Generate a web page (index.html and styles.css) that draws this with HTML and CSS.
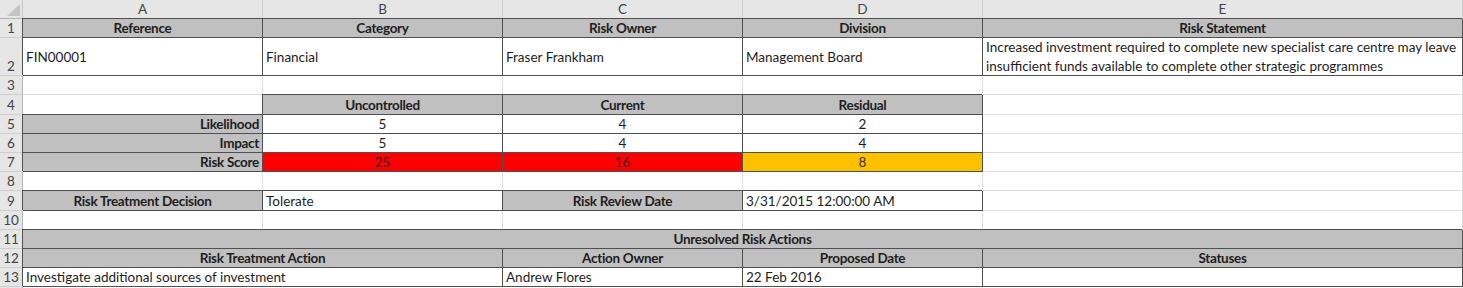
FILE: index.html
```html
<!DOCTYPE html>
<html>
<head>
<meta charset="utf-8">
<link rel="stylesheet" href="styles.css">
</head>
<body>
<div class="sheet">
  <div class="corner"><svg width="22" height="17" viewBox="0 0 22 17"><polygon points="20,4 20,16 7,16" fill="#c4c4c4"/></svg></div>
  <div class="ch">A</div><div class="ch">B</div><div class="ch">C</div><div class="ch">D</div><div class="ch">E</div>

  <div class="rh">1</div>
  <div class="c b hd">Reference</div><div class="c b hd">Category</div><div class="c b hd">Risk Owner</div><div class="c b hd">Division</div><div class="c b hd">Risk Statement</div>

  <div class="rh bottom">2</div>
  <div class="c b">FIN00001</div><div class="c b">Financial</div><div class="c b">Fraser Frankham</div><div class="c b">Management Board</div><div class="c b wrap">Increased investment required to complete new specialist care centre may leave<br>insufficient funds available to complete other strategic programmes</div>

  <div class="rh">3</div>
  <div class="c"></div><div class="c"></div><div class="c"></div><div class="c"></div><div class="c"></div>

  <div class="rh">4</div>
  <div class="c"></div><div class="c b hd">Uncontrolled</div><div class="c b hd">Current</div><div class="c b hd">Residual</div><div class="c"></div>

  <div class="rh">5</div>
  <div class="c b hd right">Likelihood</div><div class="c b mid">5</div><div class="c b mid">4</div><div class="c b mid">2</div><div class="c"></div>

  <div class="rh">6</div>
  <div class="c b hd right">Impact</div><div class="c b mid">5</div><div class="c b mid">4</div><div class="c b mid">4</div><div class="c"></div>

  <div class="rh">7</div>
  <div class="c b hd right">Risk Score</div><div class="c b mid red">25</div><div class="c b mid red">16</div><div class="c b mid amber">8</div><div class="c"></div>

  <div class="rh">8</div>
  <div class="c"></div><div class="c"></div><div class="c"></div><div class="c"></div><div class="c"></div>

  <div class="rh">9</div>
  <div class="c b hd">Risk Treatment Decision</div><div class="c b">Tolerate</div><div class="c b hd">Risk Review Date</div><div class="c b">3/31/2015 12:00:00 AM</div><div class="c"></div>

  <div class="rh">10</div>
  <div class="c"></div><div class="c"></div><div class="c"></div><div class="c"></div><div class="c"></div>

  <div class="rh">11</div>
  <div class="c b hd span5">Unresolved Risk Actions</div>

  <div class="rh">12</div>
  <div class="c b hd span2">Risk Treatment Action</div><div class="c b hd">Action Owner</div><div class="c b hd">Proposed Date</div><div class="c b hd">Statuses</div>

  <div class="rh">13</div>
  <div class="c b span2">Investigate additional sources of investment</div><div class="c b">Andrew Flores</div><div class="c b">22 Feb 2016</div><div class="c b"></div>

  <div class="rh"></div>
  <div class="c"></div><div class="c"></div><div class="c"></div><div class="c"></div><div class="c"></div>
</div>
</body>
</html>
```

FILE: styles.css
```css
html, body {
  margin: 0;
  padding: 0;
  background: #ffffff;
}

body {
  font-family: Lato, "Open Sans", sans-serif;
  font-size: 13.5px;
  color: #1e1e1e;
  overflow: hidden;
}

.sheet {
  display: grid;
  grid-template-columns: 23px 240px 240px 240px 240px 480px;
  grid-template-rows: 19px 19px 38px 19px 20px 19px 19px 19px 19px 20px 19px 19px 19px 19px 4px;
  width: 1463px;
  height: 288px;
  overflow: hidden;
}

.corner {
  background: #e6e6e6;
  border-right: 1px solid #c8c8c8;
  border-bottom: 1px solid #b4b4b4;
  box-sizing: border-box;
}

.corner svg {
  display: block;
}

.ch {
  background: #e6e6e6;
  border-right: 1px solid #cfcfcf;
  border-bottom: 1px solid #b4b4b4;
  box-sizing: border-box;
  display: flex;
  align-items: center;
  justify-content: center;
  color: #444444;
  font-size: 13.5px;
}

.rh {
  background: #e6e6e6;
  border-right: 1px solid #b4b4b4;
  border-bottom: 1px solid #cfcfcf;
  box-sizing: border-box;
  display: flex;
  align-items: center;
  justify-content: center;
  color: #444444;
  font-size: 13.5px;
}

.rh.bottom {
  align-items: flex-end;
  padding-bottom: 1px;
}

.c {
  border-right: 1px solid #dedede;
  border-bottom: 1px solid #dedede;
  box-sizing: border-box;
  display: flex;
  align-items: center;
  padding: 0 3px;
  white-space: nowrap;
  overflow: visible;
  background: #ffffff;
}

.c.b {
  border-right-color: #505050;
  border-bottom-color: #505050;
  box-shadow: -1px -1px 0 0 #505050;
}

.c.hd {
  background: #c0c0c0;
  font-weight: bold;
  letter-spacing: -0.3px;
  justify-content: center;
}

.c.right {
  justify-content: flex-end;
}

.c.mid {
  justify-content: center;
}

.c.red {
  background: #ff0000;
  color: #3a0a0a;
}

.c.amber {
  background: #ffc000;
  color: #3a2a00;
}

.c.wrap {
  white-space: normal;
  line-height: 19px;
}

.span2 {
  grid-column: span 2;
}

.span5 {
  grid-column: span 5;
}
```
